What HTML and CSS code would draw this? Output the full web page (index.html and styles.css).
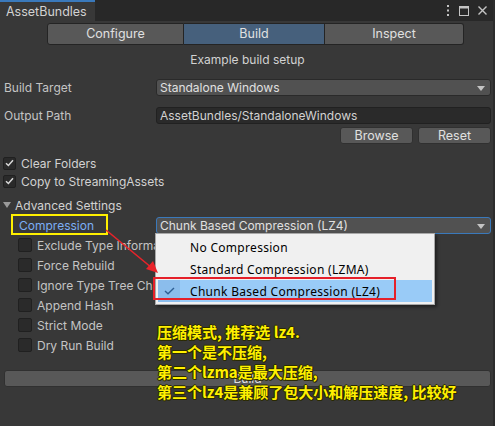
FILE: index.html
```html
<!DOCTYPE html>
<html>
<head>
<meta charset="utf-8">
<link rel="stylesheet" href="styles.css">
</head>
<body>
<div class="window">
  <div class="tabbar">
    <div class="tab">AssetBundles</div>
    <div class="winicons">
      <svg width="4" height="11" viewBox="0 0 4 11"><rect x="1" y="0" width="2" height="2" fill="#c4c4c4"/><rect x="1" y="4.5" width="2" height="2" fill="#c4c4c4"/><rect x="1" y="9" width="2" height="2" fill="#c4c4c4"/></svg>
      <svg width="10" height="10" viewBox="0 0 10 10"><rect x="0.5" y="0.5" width="9" height="9" fill="none" stroke="#c4c4c4"/><rect x="0" y="0" width="10" height="2.5" fill="#c4c4c4"/></svg>
      <svg width="9" height="9" viewBox="0 0 9 9"><path d="M0.5 0.5L8.5 8.5M8.5 0.5L0.5 8.5" stroke="#c4c4c4" stroke-width="1.4"/></svg>
    </div>
  </div>

  <div class="content">
    <div class="toolbar">
      <div class="seg seg-left">Configure</div>
      <div class="seg seg-mid active">Build</div>
      <div class="seg seg-right">Inspect</div>
    </div>
    <div class="subtitle">Example build setup</div>

    <div class="row row-target">
      <div class="label">Build Target</div>
      <div class="dropdown">Standalone Windows<span class="caret"></span></div>
    </div>
    <div class="row row-output">
      <div class="label">Output Path</div>
      <div class="textfield">AssetBundles/StandaloneWindows</div>
    </div>
    <div class="btnrow">
      <div class="btn">Browse</div>
      <div class="btn">Reset</div>
    </div>

    <div class="crow crow-first"><span class="cb checked"><svg width="9" height="8" viewBox="0 0 9 8"><path d="M1 4.2L3.4 6.5L8 1.3" fill="none" stroke="#d8d8d8" stroke-width="1.5"/></svg></span>Clear Folders</div>
    <div class="crow"><span class="cb checked"><svg width="9" height="8" viewBox="0 0 9 8"><path d="M1 4.2L3.4 6.5L8 1.3" fill="none" stroke="#d8d8d8" stroke-width="1.5"/></svg></span>Copy to StreamingAssets</div>

    <div class="foldout"><span class="tri"></span>Advanced Settings</div>
    <div class="row row-comp">
      <div class="label label-blue">Compression</div>
      <div class="dropdown focused">Chunk Based Compression (LZ4)<span class="caret"></span></div>
    </div>
    <div class="subrow"><span class="cb"></span>Exclude Type Information</div>
    <div class="subrow"><span class="cb"></span>Force Rebuild</div>
    <div class="subrow"><span class="cb"></span>Ignore Type Tree Changes</div>
    <div class="subrow"><span class="cb"></span>Append Hash</div>
    <div class="subrow"><span class="cb"></span>Strict Mode</div>
    <div class="subrow"><span class="cb"></span>Dry Run Build</div>

    <div class="buildbtn">Build</div>
  </div>

  <div class="popup">
    <div class="item"><span class="chk"></span>No Compression</div>
    <div class="item"><span class="chk"></span>Standard Compression (LZMA)</div>
    <div class="item selected"><span class="chk"><svg width="11" height="8" viewBox="0 0 11 8"><path d="M1 4L4 6.8L10 1" fill="none" stroke="#2f5f93" stroke-width="1.4"/></svg></span>Chunk Based Compression (LZ4)</div>
  </div>

  <div class="yellowbox"></div>
  <div class="redbox"></div>
  <svg class="arrow" width="495" height="426" viewBox="0 0 495 426">
    <line x1="106" y1="230" x2="152" y2="268" stroke="#e8232a" stroke-width="1.6"/>
    <polygon points="158,273 146,269 153,261" fill="#e8232a"/>
  </svg>

  <div class="note">压缩模式, 推荐选 lz4.<br>第一个是不压缩,<br>第二个lzma是最大压缩,<br>第三个lz4是兼顾了包大小和解压速度, 比较好</div>
</div>
</body>
</html>
```

FILE: styles.css
```css
html, body {
  margin: 0;
  padding: 0;
}
body {
  background: #383838;
  font-family: Inter, "Noto Sans", sans-serif;
  font-size: 12px;
  color: #c4c4c4;
  width: 495px;
  height: 426px;
  overflow: hidden;
}
.window {
  position: relative;
  width: 495px;
  height: 426px;
  background: #383838;
  border-right: 2px solid #2c2c2c;
  box-sizing: border-box;
}
.tabbar {
  display: flex;
  height: 21px;
  background: #282828;
}
.tab {
  width: 89px;
  height: 19px;
  padding-left: 6px;
  border-top: 2px solid #3a79bb;
  background: #383838;
  line-height: 19px;
  color: #d2d2d2;
  font-size: 12.5px;
}
.winicons {
  margin-left: auto;
  display: flex;
  align-items: center;
  gap: 9px;
  padding-right: 6px;
}
.content {
  padding: 0 2px 0 4px;
}
.toolbar {
  display: flex;
  margin: 2px 0 0 43px;
  height: 22px;
}
.seg {
  height: 20px;
  line-height: 20px;
  text-align: center;
  background: #585858;
  border: 1px solid #242424;
  color: #e0e0e0;
  font-size: 12.5px;
}
.seg-left { width: 135px; border-radius: 3px 0 0 3px; }
.seg-mid { width: 140px; border-left: none; }
.seg-right { width: 138px; border-left: none; border-radius: 0 3px 3px 0; }
.seg.active { background: #46607c; }
.subtitle {
  height: 30px;
  line-height: 30px;
  text-align: center;
  color: #d2d2d2;
}
.row {
  display: flex;
  align-items: center;
  height: 19px;
}
.row-target { margin-top: 3px; }
.row-output { margin-top: 9px; }
.label {
  width: 152px;
  color: #c4c4c4;
}
.label-blue {
  color: #7baef5;
  padding-left: 15px;
  width: 137px;
}
.dropdown {
  position: relative;
  flex: 1;
  height: 15px;
  line-height: 15px;
  padding: 0 0 0 3px;
  background: #515151;
  border: 1px solid #2a2a2a;
  border-radius: 3px;
  color: #e0e0e0;
}
.dropdown.focused {
  border-color: #3a79bb;
}
.caret {
  position: absolute;
  right: 5px;
  top: 6px;
  width: 0;
  height: 0;
  border-left: 4px solid transparent;
  border-right: 4px solid transparent;
  border-top: 5px solid #c4c4c4;
}
.textfield {
  flex: 1;
  height: 15px;
  line-height: 15px;
  padding-left: 3px;
  background: #2a2a2a;
  border: 1px solid #212121;
  border-radius: 3px;
  color: #d2d2d2;
}
.btnrow {
  display: flex;
  justify-content: flex-end;
  gap: 5px;
  margin-top: 2px;
  height: 17px;
}
.btn {
  width: 71px;
  height: 15px;
  line-height: 15px;
  text-align: center;
  background: #585858;
  border: 1px solid #303030;
  border-radius: 3px;
  color: #e0e0e0;
  font-size: 12.5px;
}
.crow {
  display: flex;
  align-items: center;
  height: 18px;
  margin-left: -1px;
  color: #d2d2d2;
}
.crow-first { margin-top: 10px; }
.cb {
  display: inline-flex;
  align-items: center;
  justify-content: center;
  width: 11px;
  height: 11px;
  background: #2a2a2a;
  border: 1px solid #202020;
  border-radius: 2px;
  margin-right: 5px;
}
.foldout {
  display: flex;
  align-items: center;
  height: 18px;
  margin-top: 6px;
  margin-left: -1px;
  color: #d2d2d2;
}
.tri {
  width: 0;
  height: 0;
  border-left: 4px solid transparent;
  border-right: 4px solid transparent;
  border-top: 6px solid #9a9a9a;
  margin-right: 4px;
}
.row-comp {
  height: 20px;
  margin-top: 1px;
}
.subrow {
  display: flex;
  align-items: center;
  height: 20px;
  padding-left: 14px;
  color: #c4c4c4;
}
.subrow .cb {
  width: 12px;
  height: 12px;
}
.buildbtn {
  margin-top: 15px;
  height: 15px;
  line-height: 15px;
  text-align: center;
  background: #585858;
  border: 1px solid #303030;
  border-radius: 3px;
  color: #e0e0e0;
}

/* overlay: dropdown menu */
.popup {
  position: absolute;
  left: 155px;
  top: 233px;
  width: 274px;
  padding: 2px;
  background: #f0f0f0;
  border: 1px solid #a8a8a8;
  box-shadow: 2px 2px 3px rgba(0,0,0,0.45);
  font-family: "Noto Sans", "Noto Sans CJK SC", sans-serif;
  font-size: 12px;
  color: #000;
}
.item {
  display: flex;
  align-items: center;
  height: 22px;
  letter-spacing: 0.3px;
}
.chk {
  display: inline-flex;
  align-items: center;
  justify-content: center;
  width: 22px;
  height: 22px;
  margin-right: 10px;
}
.item.selected {
  background: #99cbf7;
}
.item.selected .chk {
  background: #8bbdec;
}

/* annotations */
.yellowbox {
  position: absolute;
  left: 11px;
  top: 214px;
  width: 93px;
  height: 17px;
  border: 2px solid #fff000;
}
.redbox {
  position: absolute;
  left: 153px;
  top: 277px;
  width: 239px;
  height: 19px;
  border: 2px solid #e5202a;
}
.arrow {
  position: absolute;
  left: 0;
  top: 0;
}
.note {
  position: absolute;
  left: 157px;
  top: 322px;
  font-family: "Noto Sans CJK SC", sans-serif;
  font-weight: bold;
  font-size: 15px;
  line-height: 20px;
  color: #fff000;
  text-shadow: 1px 1px 0 #2a2a00, -1px 0 0 #2a2a00, 0 -1px 0 #2a2a00, 1px 0 0 #2a2a00, 0 1px 0 #2a2a00;
  white-space: nowrap;
}
```
